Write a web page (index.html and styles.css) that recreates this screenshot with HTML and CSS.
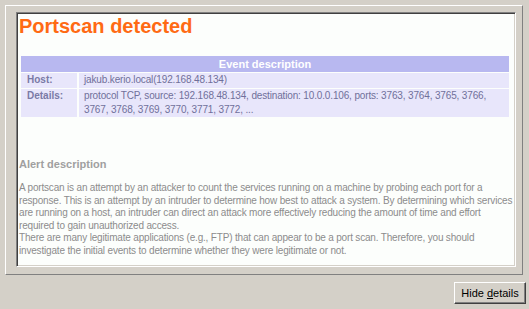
FILE: index.html
```html
<!DOCTYPE html>
<html lang="en">
<head>
    <meta charset="UTF-8">
    <title>Portscan detected</title>
    <link rel="stylesheet" href="styles.css">
</head>
<body>
    <div class="frame">
        <div class="well">
            <h1 class="title">Portscan detected</h1>
            <table class="event">
                <tr><th colspan="2">Event description</th></tr>
                <tr class="short">
                    <td class="label">Host:</td>
                    <td>jakub.kerio.local(192.168.48.134)</td>
                </tr>
                <tr>
                    <td class="label">Details:</td>
                    <td>protocol TCP, source: 192.168.48.134, destination: 10.0.0.106, ports: 3763, 3764, 3765, 3766, 3767, 3768, 3769, 3770, 3771, 3772, ...</td>
                </tr>
            </table>
            <h2 class="section">Alert description</h2>
            <p class="desc">A portscan is an attempt by an attacker to count the services running on a machine by probing each port for a response. This is an attempt by an intruder to determine how best to attack a system. By determining which services are running on a host, an intruder can direct an attack more effectively reducing the amount of time and effort required to gain unauthorized access.<br>There are many legitimate applications (e.g., FTP) that can appear to be a port scan. Therefore, you should investigate the initial events to determine whether they were legitimate or not.</p>
        </div>
    </div>
    <div class="actions">
        <button class="btn">Hide <u>d</u>etails</button>
    </div>
</body>
</html>
```

FILE: styles.css
```css
body {
    margin: 0;
    padding: 0;
    background-color: #d4d0c8;
    font-family: "Liberation Sans", Arial, sans-serif;
}
.frame {
    margin: 5px 6px 0 5px;
    padding: 6px 6px 7px 10px;
    border: 1px solid;
    border-color: #fff #808080 #808080 #fff;
}
.well {
    height: 255px;
    box-sizing: border-box;
    padding: 0 2px;
    overflow: hidden;
    background-color: #fcfefc;
    border: 1px solid;
    border-color: #808080 #fff #fff #808080;
    box-shadow: inset 1px 1px #404040, inset -1px -1px #d4d0c8;
}
.title {
    margin: 1px 0 0 0;
    font-size: 20px;
    line-height: 24px;
    font-weight: bold;
    color: #ff6a13;
}
.event {
    width: 492px;
    margin-top: 17px;
    border-spacing: 2px 1px;
    font-size: 10px;
    letter-spacing: -0.15px;
}
.event th {
    padding: 0;
    height: 16px;
    line-height: 16px;
    font-size: 11px;
    letter-spacing: 0;
    color: #fff;
    background-color: #b8b8f0;
}
.event td {
    padding: 0 5px 0 5px;
    line-height: 14px;
    vertical-align: top;
    color: #70709a;
    background-color: #e8e6fb;
}
.event .short td {
    padding-bottom: 1px;
}
.event td.label {
    width: 45px;
    padding-left: 6px;
    font-weight: bold;
    letter-spacing: 0;
    color: #7a7aa6;
}
.section {
    margin: 40px 0 0 0;
    font-size: 11px;
    line-height: 13px;
    color: #a0a0a0;
}
.desc {
    margin: 11px -2px 0 0;
    font-size: 10px;
    letter-spacing: -0.18px;
    line-height: 12.5px;
    color: #8c8c8c;
}
.actions {
    display: flex;
    justify-content: flex-end;
    padding: 7px 3px 0 0;
}
.btn {
    width: 72px;
    height: 22px;
    padding: 0;
    font-family: "Liberation Sans", Arial, sans-serif;
    font-size: 11px;
    color: #000;
    background-color: #d4d0c8;
    border: 1px solid;
    border-color: #fff #404040 #404040 #fff;
    box-shadow: inset -1px -1px #808080;
}
```
